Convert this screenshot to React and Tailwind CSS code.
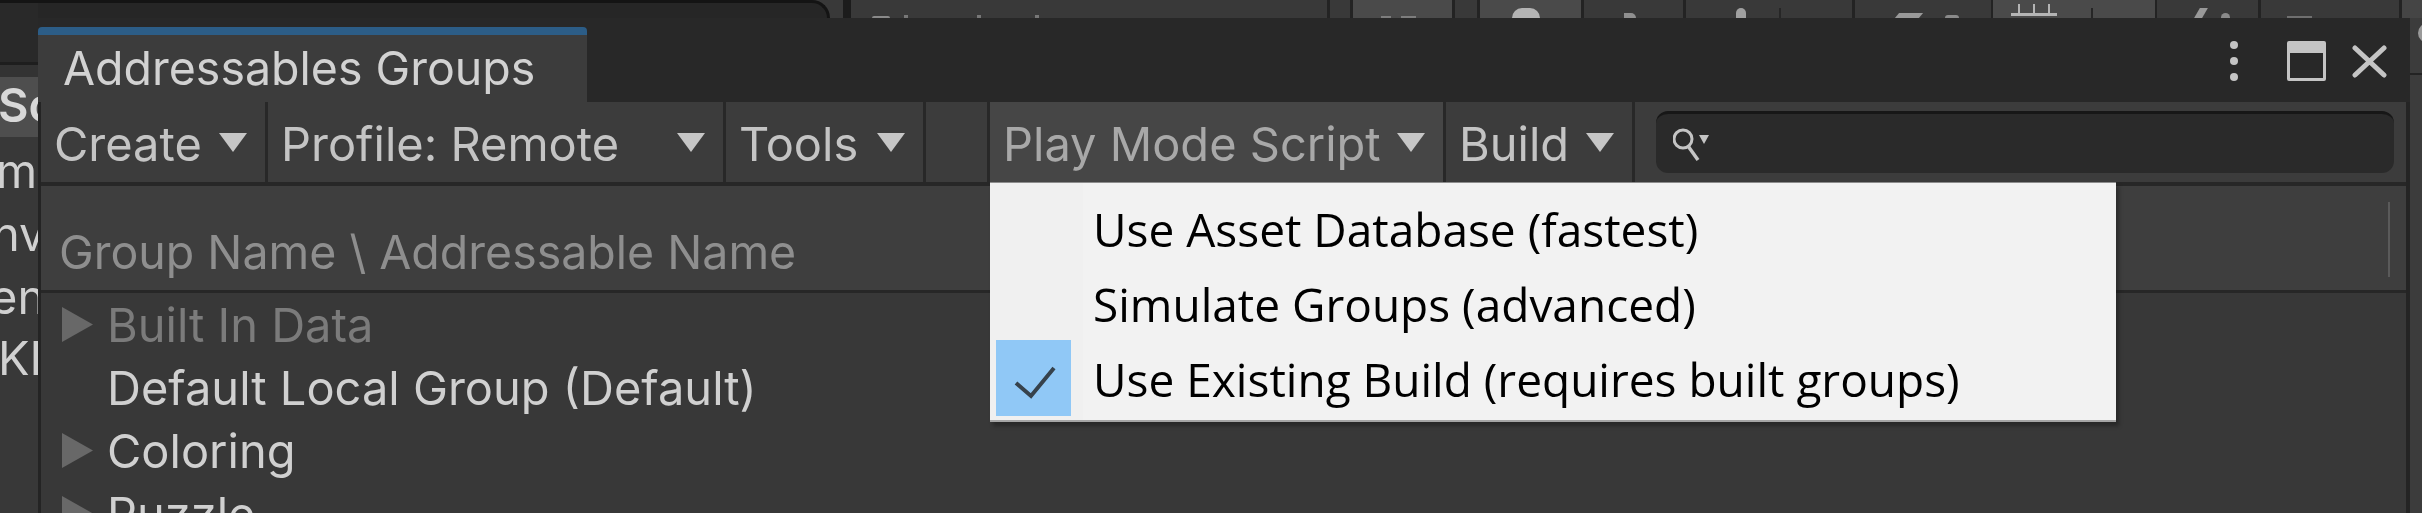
import React from 'react';

const INTER = "font-['Inter',sans-serif]";

function Caret({ className }) {
    return (
        <svg viewBox="0 0 28 19" className={className}>
            <path d="M0 0H28L14 19Z" fill="currentColor" />
        </svg>
    );
}

function ToolbarButton({ label, width, active }) {
    return (
        <div className={`${width} ${active ? 'bg-[#464646] text-[#a8a8a8]' : 'text-[#c4c4c4]'} h-full flex items-center justify-between shrink-0 pl-[13px] pr-[18px] border-r-[3px] border-[#282828]`}>
            <span className="text-[47px] leading-none whitespace-nowrap pt-[3px]">{label}</span>
            {label && <Caret className="w-[28px] h-[19px] shrink-0 text-[#c6c6c6]" />}
        </div>
    );
}

function TreeRow({ label, muted, arrow }) {
    return (
        <div className="h-[63px] shrink-0 flex items-center pl-[21px]">
            <div className="w-[45px] shrink-0">
                {arrow && (
                    <svg viewBox="0 0 31 35" className="w-[31px] h-[35px]">
                        <path d="M0 0L31 17.5L0 35Z" fill="#686868" />
                    </svg>
                )}
            </div>
            <span className={`text-[47px] leading-none whitespace-nowrap ${muted ? 'text-[#7b7b7b]' : 'text-[#d0d0d0]'}`}>{label}</span>
        </div>
    );
}

function MenuRow({ label, checked }) {
    return (
        <div className="h-[75px] flex items-center pl-[6px]">
            <div className={`w-[75px] h-[76px] shrink-0 ${checked ? 'bg-[#90c8f6]' : ''}`}>
                {checked && (
                    <svg viewBox="0 0 75 76" className="w-[75px] h-[76px]">
                        <path d="M20 43L35 56L58 28" fill="none" stroke="#36424c" strokeWidth="4" />
                    </svg>
                )}
            </div>
            <span className="ml-[22px] pt-[3px] text-[46px] leading-none whitespace-nowrap text-black font-['Open_Sans',sans-serif]">{label}</span>
        </div>
    );
}

function TopStrip() {
    return (
        <div className="h-[18px] shrink-0 flex bg-[#393939] overflow-hidden">
            <div className="w-[792px] h-[18px] shrink-0 bg-[#262626] border-t-[3px] border-r-[3px] border-[#141414] rounded-tr-[24px]" />
            <div className="w-[13px] shrink-0" />
            <div className="w-[8px] shrink-0 bg-[#1c1c1c]" />
            <div className="w-[479px] shrink-0 flex items-end pl-[21px] gap-[14px] border-r-[3px] border-[#232323]">
                <div className="w-[18px] h-[2px] rounded-t-full bg-[#8a8a8a]" />
                <div className="w-[4px] h-[3px] bg-[#777777]" />
                <div className="w-[4px] h-[3px] ml-[55px] bg-[#777777]" />
                <div className="w-[4px] h-[3px] ml-[40px] bg-[#777777]" />
            </div>
            <div className="w-[23px] shrink-0 border-r-[3px] border-[#232323]" />
            <div className="w-[102px] shrink-0 bg-[#4a4a4a] flex items-end pl-[28px] gap-[10px] border-r-[3px] border-[#232323]">
                <div className="w-[10px] h-[2px] bg-[#7d7d7d]" />
                <div className="w-[15px] h-[2px] bg-[#7d7d7d]" />
            </div>
            <div className="w-[25px] shrink-0 border-r-[3px] border-[#232323]" />
            <div className="w-[104px] shrink-0 bg-[#4a4a4a] flex items-end pl-[32px] border-r-[3px] border-[#232323]">
                <div className="w-[28px] h-[10px] rounded-t-full bg-[#b4b4b4]" />
            </div>
            <div className="w-[102px] shrink-0 flex items-end pl-[40px] border-r-[3px] border-[#232323]">
                <div className="w-[12px] h-[5px] rounded-tr-full bg-[#8f8f8f]" />
            </div>
            <div className="w-[169px] shrink-0 flex items-end pl-[50px] border-r-[3px] border-[#232323]">
                <div className="w-[10px] h-[10px] bg-[#a0a0a0] rounded-t-full" />
                <div className="w-[2px] h-[10px] ml-[33px] bg-[#262626]" />
            </div>
            <div className="w-[136px] shrink-0 flex items-end pl-[42px]">
                <div className="w-[24px] h-[5px] -skew-x-[40deg] bg-[#999999]" />
                <div className="w-[14px] h-[3px] ml-[24px] rounded-t-full bg-[#8a8a8a]" />
            </div>
            <div className="w-[166px] shrink-0 bg-[#4a4a4a] flex items-end pl-[18px] border-x-[2px] border-[#232323]">
                <div className="w-[46px] h-[12px] border-b-[3px] border-[#b4b4b4] mb-[2px] flex justify-around">
                    <div className="w-[2px] h-full bg-[#b4b4b4]" />
                    <div className="w-[2px] h-full bg-[#b4b4b4]" />
                    <div className="w-[2px] h-full bg-[#b4b4b4]" />
                </div>
                <div className="w-[2px] h-[10px] ml-[34px] bg-[#262626]" />
            </div>
            <div className="w-[104px] shrink-0 flex items-end pl-[40px] border-r-[3px] border-[#232323]">
                <div className="w-[8px] h-[10px] -skew-x-[30deg] bg-[#999999]" />
                <div className="w-[9px] h-[5px] ml-[16px] rounded-t-full bg-[#8a8a8a]" />
            </div>
            <div className="w-[141px] shrink-0 flex items-end pl-[26px] border-r-[3px] border-[#232323]">
                <div className="w-[25px] h-[2px] bg-[#6f6f6f]" />
            </div>
            <div className="flex-1 bg-[#454545]" />
        </div>
    );
}

function LeftPanel() {
    return (
        <div className="w-[38px] shrink-0 flex flex-col bg-[#383838] text-[#d0d0d0] overflow-hidden text-[47px] leading-none font-['Inter',sans-serif]">
            <div className="h-[62px] shrink-0 bg-[#292929] border-t-[3px] border-[#141414]" />
            <div className="h-[3px] shrink-0 bg-[#1e1e1e]" />
            <div className="h-[12px] shrink-0 bg-[#333333]" />
            <div className="h-[60px] shrink-0 bg-[#4e4e4e] flex items-center pb-[6px] whitespace-nowrap text-[#d8d8d8]">
                <span className="-ml-[2px] font-semibold">Sc</span>
            </div>
            <div className="h-[63px] shrink-0 flex items-center -ml-[4px] pt-[4px] whitespace-nowrap">mo</div>
            <div className="h-[63px] shrink-0 flex items-center -ml-[8px] pt-[4px] whitespace-nowrap">nv</div>
            <div className="h-[63px] shrink-0 flex items-center -ml-[10px] pt-[4px] whitespace-nowrap">en</div>
            <div className="h-[63px] shrink-0 flex items-center -ml-[2px] whitespace-nowrap">KI</div>
        </div>
    );
}

function GroupsWindow() {
    return (
        <div className={`absolute left-[38px] top-[18px] w-[2372px] h-[495px] flex flex-col bg-[#383838] ${INTER}`}>
            <div className="h-[84px] shrink-0 flex bg-[#282828] pt-[9px]">
                <div className="w-[549px] h-[75px] shrink-0 flex items-center pl-[25px] bg-[#3c3c3c] border-t-[8px] border-[#2c5d87] rounded-t-[4px]">
                    <span className="text-[46.5px] leading-none whitespace-nowrap text-[#d2d2d2]">Addressables Groups</span>
                </div>
                <div className="flex-1 flex items-center justify-end pr-[23px]">
                    <div className="flex flex-col gap-[8px] -mt-[7px]">
                        <div className="w-[8px] h-[8px] rounded-full bg-[#c4c4c4]" />
                        <div className="w-[8px] h-[8px] rounded-full bg-[#c4c4c4]" />
                        <div className="w-[8px] h-[8px] rounded-full bg-[#c4c4c4]" />
                    </div>
                    <div className="w-[39px] h-[40px] ml-[49px] -mt-[7px] border-[3px] border-t-[12px] border-[#c4c4c4] rounded-[2px]" />
                    <svg viewBox="0 0 35 33" className="w-[35px] h-[33px] ml-[26px] -mt-[7px]">
                        <path d="M3 3L32 30M32 3L3 30" fill="none" stroke="#c4c4c4" strokeWidth="5" strokeLinecap="round" />
                    </svg>
                </div>
            </div>
            <div className="flex-1 flex flex-col min-h-0 border-l-[3px] border-r-[4px] border-[#242424]">
                <div className="h-[84px] shrink-0 flex bg-[#3c3c3c] border-b-[4px] border-[#272727]">
                    <ToolbarButton label="Create" width="w-[227px]" />
                    <ToolbarButton label="Profile: Remote" width="w-[458px]" />
                    <ToolbarButton label="Tools" width="w-[200px]" />
                    <ToolbarButton label="" width="w-[64px]" />
                    <ToolbarButton label="Play Mode Script" width="w-[456px]" active />
                    <ToolbarButton label="Build" width="w-[189px]" />
                    <div className="flex-1 flex items-center pl-[21px] pr-[12px]">
                        <div className="flex-1 h-[62px] flex items-center pl-[17px] bg-[#2a2a2a] border-t-[3px] border-[#171717] rounded-[12px]">
                            <svg viewBox="0 0 44 36" className="w-[44px] h-[36px]">
                                <circle cx="10" cy="13" r="9" fill="none" stroke="#c4c4c4" strokeWidth="3" />
                                <path d="M15 20L25 34" fill="none" stroke="#c4c4c4" strokeWidth="3.5" />
                                <path d="M26 9H36L31 18Z" fill="#c4c4c4" />
                            </svg>
                        </div>
                    </div>
                </div>
                <div className="h-[107px] shrink-0 flex items-end justify-between pl-[18px] pr-[16px] pb-[15px] bg-[#3e3e3e] border-b-[3px] border-[#272727]">
                    <span className="text-[46.5px] leading-none whitespace-nowrap text-[#8e8e8e]">Group Name \ Addressable Name</span>
                    <div className="w-[2px] h-[75px] -mb-[2px] bg-[#5a5a5a]" />
                </div>
                <div className="flex-1 min-h-0 overflow-hidden">
                    <TreeRow label="Built In Data" muted arrow />
                    <TreeRow label="Default Local Group (Default)" />
                    <TreeRow label="Coloring" arrow />
                    <TreeRow label="Puzzle" arrow />
                </div>
            </div>
            <div className="absolute left-[952px] top-[164px] w-[1126px] h-[240px] pt-[7px] bg-[linear-gradient(90deg,#f0f0f0_93px,#f2f2f2_93px)] border-t border-b-[2px] border-t-[#8d8d8d] border-b-[#a5a5a5] shadow-[3px_4px_4px_rgba(0,0,0,0.3)]">
                <MenuRow label="Use Asset Database (fastest)" />
                <MenuRow label="Simulate Groups (advanced)" />
                <MenuRow label="Use Existing Build (requires built groups)" checked />
            </div>
        </div>
    );
}

export default function App() {
    return (
        <div className="relative w-[2422px] h-[513px] flex overflow-hidden bg-[#383838] blur-[0.6px]">
            <LeftPanel />
            <div className="flex-1 flex flex-col min-w-0">
                <TopStrip />
                <div className="flex-1 flex justify-end">
                    <div className="w-[12px] bg-[#3c3c3c] overflow-hidden">
                        <div className="w-[16px] h-[20px] mt-[5px] ml-[8px] rounded-l-full bg-[#9a9a9a]" />
                        <div className="h-[2px] mt-[30px] bg-[#232323]" />
                    </div>
                </div>
            </div>
            <GroupsWindow />
        </div>
    );
}
